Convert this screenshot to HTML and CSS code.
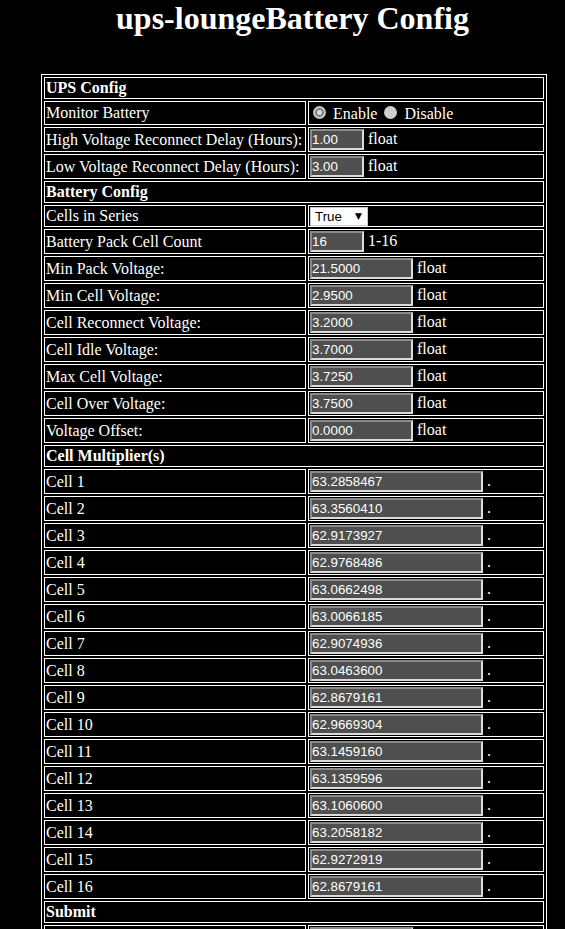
FILE: index.html
```html
<!DOCTYPE html>
<html>
<head>
<meta charset="utf-8">
<title>ups-loungeBattery Config</title>
<link rel="stylesheet" href="styles.css">
</head>
<body>
<h1 class="title">ups-loungeBattery Config</h1>
<form class="form">
<table class="cfg">
<tr><td class="head" colspan="2">UPS Config</td></tr>
<tr><td class="label">Monitor Battery</td><td><input type="radio" name="mon" checked> Enable <input type="radio" name="mon"> Disable</td></tr>
<tr><td class="label">High Voltage Reconnect Delay (Hours):</td><td><input class="in short" value="1.00"> float</td></tr>
<tr><td class="label">Low Voltage Reconnect Delay (Hours):</td><td><input class="in short" value="3.00"> float</td></tr>
<tr><td class="head" colspan="2">Battery Config</td></tr>
<tr><td class="label">Cells in Series</td><td><span class="sel"><select><option>True</option><option>False</option></select></span></td></tr>
<tr><td class="label">Battery Pack Cell Count</td><td><input class="in short" value="16"> 1-16</td></tr>
<tr><td class="label">Min Pack Voltage:</td><td><input class="in mid" value="21.5000"> float</td></tr>
<tr><td class="label">Min Cell Voltage:</td><td><input class="in mid" value="2.9500"> float</td></tr>
<tr><td class="label">Cell Reconnect Voltage:</td><td><input class="in mid" value="3.2000"> float</td></tr>
<tr><td class="label">Cell Idle Voltage:</td><td><input class="in mid" value="3.7000"> float</td></tr>
<tr><td class="label">Max Cell Voltage:</td><td><input class="in mid" value="3.7250"> float</td></tr>
<tr><td class="label">Cell Over Voltage:</td><td><input class="in mid" value="3.7500"> float</td></tr>
<tr><td class="label">Voltage Offset:</td><td><input class="in mid" value="0.0000"> float</td></tr>
<tr><td class="head" colspan="2">Cell Multiplier(s)</td></tr>
<tr><td class="label">Cell 1</td><td><input class="in long" value="63.2858467"> .</td></tr>
<tr><td class="label">Cell 2</td><td><input class="in long" value="63.3560410"> .</td></tr>
<tr><td class="label">Cell 3</td><td><input class="in long" value="62.9173927"> .</td></tr>
<tr><td class="label">Cell 4</td><td><input class="in long" value="62.9768486"> .</td></tr>
<tr><td class="label">Cell 5</td><td><input class="in long" value="63.0662498"> .</td></tr>
<tr><td class="label">Cell 6</td><td><input class="in long" value="63.0066185"> .</td></tr>
<tr><td class="label">Cell 7</td><td><input class="in long" value="62.9074936"> .</td></tr>
<tr><td class="label">Cell 8</td><td><input class="in long" value="63.0463600"> .</td></tr>
<tr><td class="label">Cell 9</td><td><input class="in long" value="62.8679161"> .</td></tr>
<tr><td class="label">Cell 10</td><td><input class="in long" value="62.9669304"> .</td></tr>
<tr><td class="label">Cell 11</td><td><input class="in long" value="63.1459160"> .</td></tr>
<tr><td class="label">Cell 12</td><td><input class="in long" value="63.1359596"> .</td></tr>
<tr><td class="label">Cell 13</td><td><input class="in long" value="63.1060600"> .</td></tr>
<tr><td class="label">Cell 14</td><td><input class="in long" value="63.2058182"> .</td></tr>
<tr><td class="label">Cell 15</td><td><input class="in long" value="62.9272919"> .</td></tr>
<tr><td class="label">Cell 16</td><td><input class="in long" value="62.8679161"> .</td></tr>
<tr><td class="head" colspan="2">Submit</td></tr>
<tr><td class="label">&nbsp;</td><td><input class="in mid" value=""></td></tr>
</table>
</form>
</body>
</html>
```
FILE: styles.css
```css
html, body {
  overflow: hidden;
}
body {
  margin: 0;
  background: #000;
  color: #fff;
  font-family: "Liberation Serif", "Times New Roman", serif;
  font-size: 16px;
}
.title {
  margin: 0;
  padding-left: 20px;
  text-align: center;
  font-size: 32px;
  font-weight: bold;
  line-height: normal;
}
.form {
  margin: 37px 0 0 41px;
}
.cfg {
  width: 506px;
  border: 1px solid #fff;
  border-collapse: separate;
  border-spacing: 2px;
}
.cfg td {
  border: 1px solid #fff;
  padding: 1px;
  text-align: left;
  vertical-align: middle;
  white-space: nowrap;
}
.cfg td.label {
  width: 258px;
}
.cfg td.head {
  font-weight: bold;
}
.in {
  box-sizing: border-box;
  height: 21px;
  margin: 0;
  padding: 1px 0;
  background: #4f4f4f;
  color: #fff;
  font-family: "Liberation Sans", Arial, sans-serif;
  font-size: 13.33px;
  border: 2px solid;
  border-color: #8a8a8a #dcdcdc #dcdcdc #8a8a8a;
  outline: none;
}
.short { width: 54px; }
.mid { width: 103px; }
.long { width: 173px; }
input[type="radio"] {
  appearance: none;
  -webkit-appearance: none;
  width: 13px;
  height: 13px;
  margin: 3px 3px 1px 3px;
  border-radius: 50%;
  background: #cfcfcf;
  vertical-align: -1px;
}
input[type="radio"]:checked {
  background: radial-gradient(circle, #d8d8d8 0 2.2px, #7c7c7c 2.7px 4px, #c4c4c4 4.5px);
}
.sel {
  position: relative;
  display: inline-block;
  vertical-align: top;
  height: 18px;
}
.sel select {
  appearance: none;
  -webkit-appearance: none;
  box-sizing: border-box;
  display: block;
  width: 58px;
  height: 19px;
  margin: 0;
  padding: 0 0 0 4px;
  background: #fff;
  color: #000;
  border: 1px solid #c8c8c8;
  border-radius: 0;
  font-family: "Liberation Sans", Arial, sans-serif;
  font-size: 13.33px;
}
.sel::after {
  content: "\25BC";
  position: absolute;
  right: 6px;
  top: 2px;
  font-family: "DejaVu Sans", sans-serif;
  font-size: 9px;
  line-height: 14px;
  color: #000;
  pointer-events: none;
}
```
